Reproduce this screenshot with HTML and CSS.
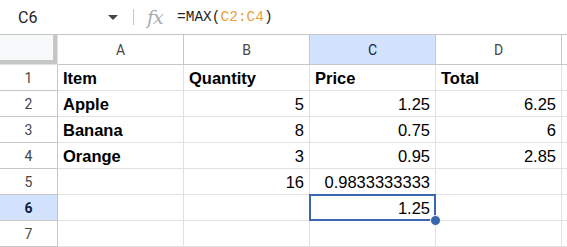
FILE: index.html
```
<!DOCTYPE html>
<html lang="en">
<head>
    <meta charset="UTF-8">
    <title>Sheet</title>
    <link rel="stylesheet" href="styles.css">
</head>
<body>
    <div class="toolbar">
        <div class="name-box">C6</div>
        <div class="name-arrow"></div>
        <div class="divider"></div>
        <div class="fx">fx</div>
        <div class="formula">=MAX(<span class="ref">C2:C4</span>)</div>
    </div>

    <div class="sheet">
        <div class="corner"></div>
        <div class="col-head">A</div>
        <div class="col-head">B</div>
        <div class="col-head active">C</div>
        <div class="col-head">D</div>
        <div class="col-head"></div>

        <div class="row-head">1</div>
        <div class="cell bold">Item</div>
        <div class="cell bold">Quantity</div>
        <div class="cell bold">Price</div>
        <div class="cell bold">Total</div>
        <div class="cell"></div>

        <div class="row-head">2</div>
        <div class="cell bold">Apple</div>
        <div class="cell num">5</div>
        <div class="cell num">1.25</div>
        <div class="cell num">6.25</div>
        <div class="cell"></div>

        <div class="row-head">3</div>
        <div class="cell bold">Banana</div>
        <div class="cell num">8</div>
        <div class="cell num">0.75</div>
        <div class="cell num">6</div>
        <div class="cell"></div>

        <div class="row-head">4</div>
        <div class="cell bold">Orange</div>
        <div class="cell num">3</div>
        <div class="cell num">0.95</div>
        <div class="cell num">2.85</div>
        <div class="cell"></div>

        <div class="row-head">5</div>
        <div class="cell"></div>
        <div class="cell num">16</div>
        <div class="cell num">0.9833333333</div>
        <div class="cell"></div>
        <div class="cell"></div>

        <div class="row-head active">6</div>
        <div class="cell"></div>
        <div class="cell"></div>
        <div class="cell num selected">1.25<span class="handle"></span></div>
        <div class="cell"></div>
        <div class="cell"></div>

        <div class="row-head">7</div>
        <div class="cell"></div>
        <div class="cell"></div>
        <div class="cell"></div>
        <div class="cell"></div>
        <div class="cell"></div>
    </div>
</body>
</html>
```

FILE: styles.css
```
:root {
    --grid-line: #e1e1e1;
    --head-line: #c4c7c5;
    --select-bg: #d3e3fd;
    --select-blue: #3a66b0;
}

body {
    margin: 0;
    background: #fff;
    font-family: 'Liberation Sans', Arial, sans-serif;
    color: #000;
    overflow: hidden;
}

.toolbar {
    height: 34px;
    border-bottom: 1px solid var(--head-line);
    display: flex;
    align-items: center;
}

.name-box {
    box-sizing: border-box;
    width: 108px;
    padding-left: 18px;
    font-family: Roboto, sans-serif;
    font-size: 16px;
    color: #1f1f1f;
}

.name-arrow {
    width: 0;
    height: 0;
    border-left: 5px solid transparent;
    border-right: 5px solid transparent;
    border-top: 5px solid #444746;
}

.divider {
    width: 1px;
    height: 16px;
    background: #c4c7c5;
    margin-left: 15px;
}

.fx {
    margin-left: 13px;
    width: 30px;
    font-family: 'DejaVu Serif', serif;
    font-style: italic;
    font-size: 19px;
    line-height: 1;
    color: #a8abb0;
    letter-spacing: -1px;
}

.formula {
    font-family: 'Liberation Mono', monospace;
    font-size: 14.5px;
    color: #1f1f1f;
}

.formula .ref {
    color: #e9a03b;
}

.sheet {
    display: grid;
    grid-template-columns: 58px repeat(4, 126px) 1fr;
    grid-template-rows: 30px repeat(7, 26px);
}

.sheet > div {
    box-sizing: border-box;
    border-right: 1px solid var(--grid-line);
    border-bottom: 1px solid var(--grid-line);
}

.corner {
    background: #f8f9fa;
    box-shadow: inset -4px -4px 0 #c4c7c5;
}

.sheet > .col-head,
.sheet > .row-head {
    display: flex;
    align-items: center;
    justify-content: center;
    font-family: Roboto, sans-serif;
    font-size: 14px;
    color: #444746;
    border-right-color: var(--head-line);
    border-bottom-color: var(--head-line);
}

.sheet > .active {
    background: var(--select-bg);
    color: #0b1f47;
}

.row-head.active {
    font-weight: bold;
}

.cell {
    display: flex;
    align-items: center;
    padding: 1px 5px 0;
    font-size: 16.5px;
    white-space: nowrap;
    position: relative;
}

.cell.bold {
    font-weight: bold;
}

.cell.num {
    justify-content: flex-end;
}

.cell.selected::after {
    content: '';
    position: absolute;
    left: -1px;
    top: -1px;
    right: -1px;
    bottom: -1px;
    border: 2px solid var(--select-blue);
}

.handle {
    position: absolute;
    right: -6px;
    bottom: -6px;
    width: 9px;
    height: 9px;
    border-radius: 50%;
    background: var(--select-blue);
    border: 1px solid #fff;
    z-index: 2;
}
```
